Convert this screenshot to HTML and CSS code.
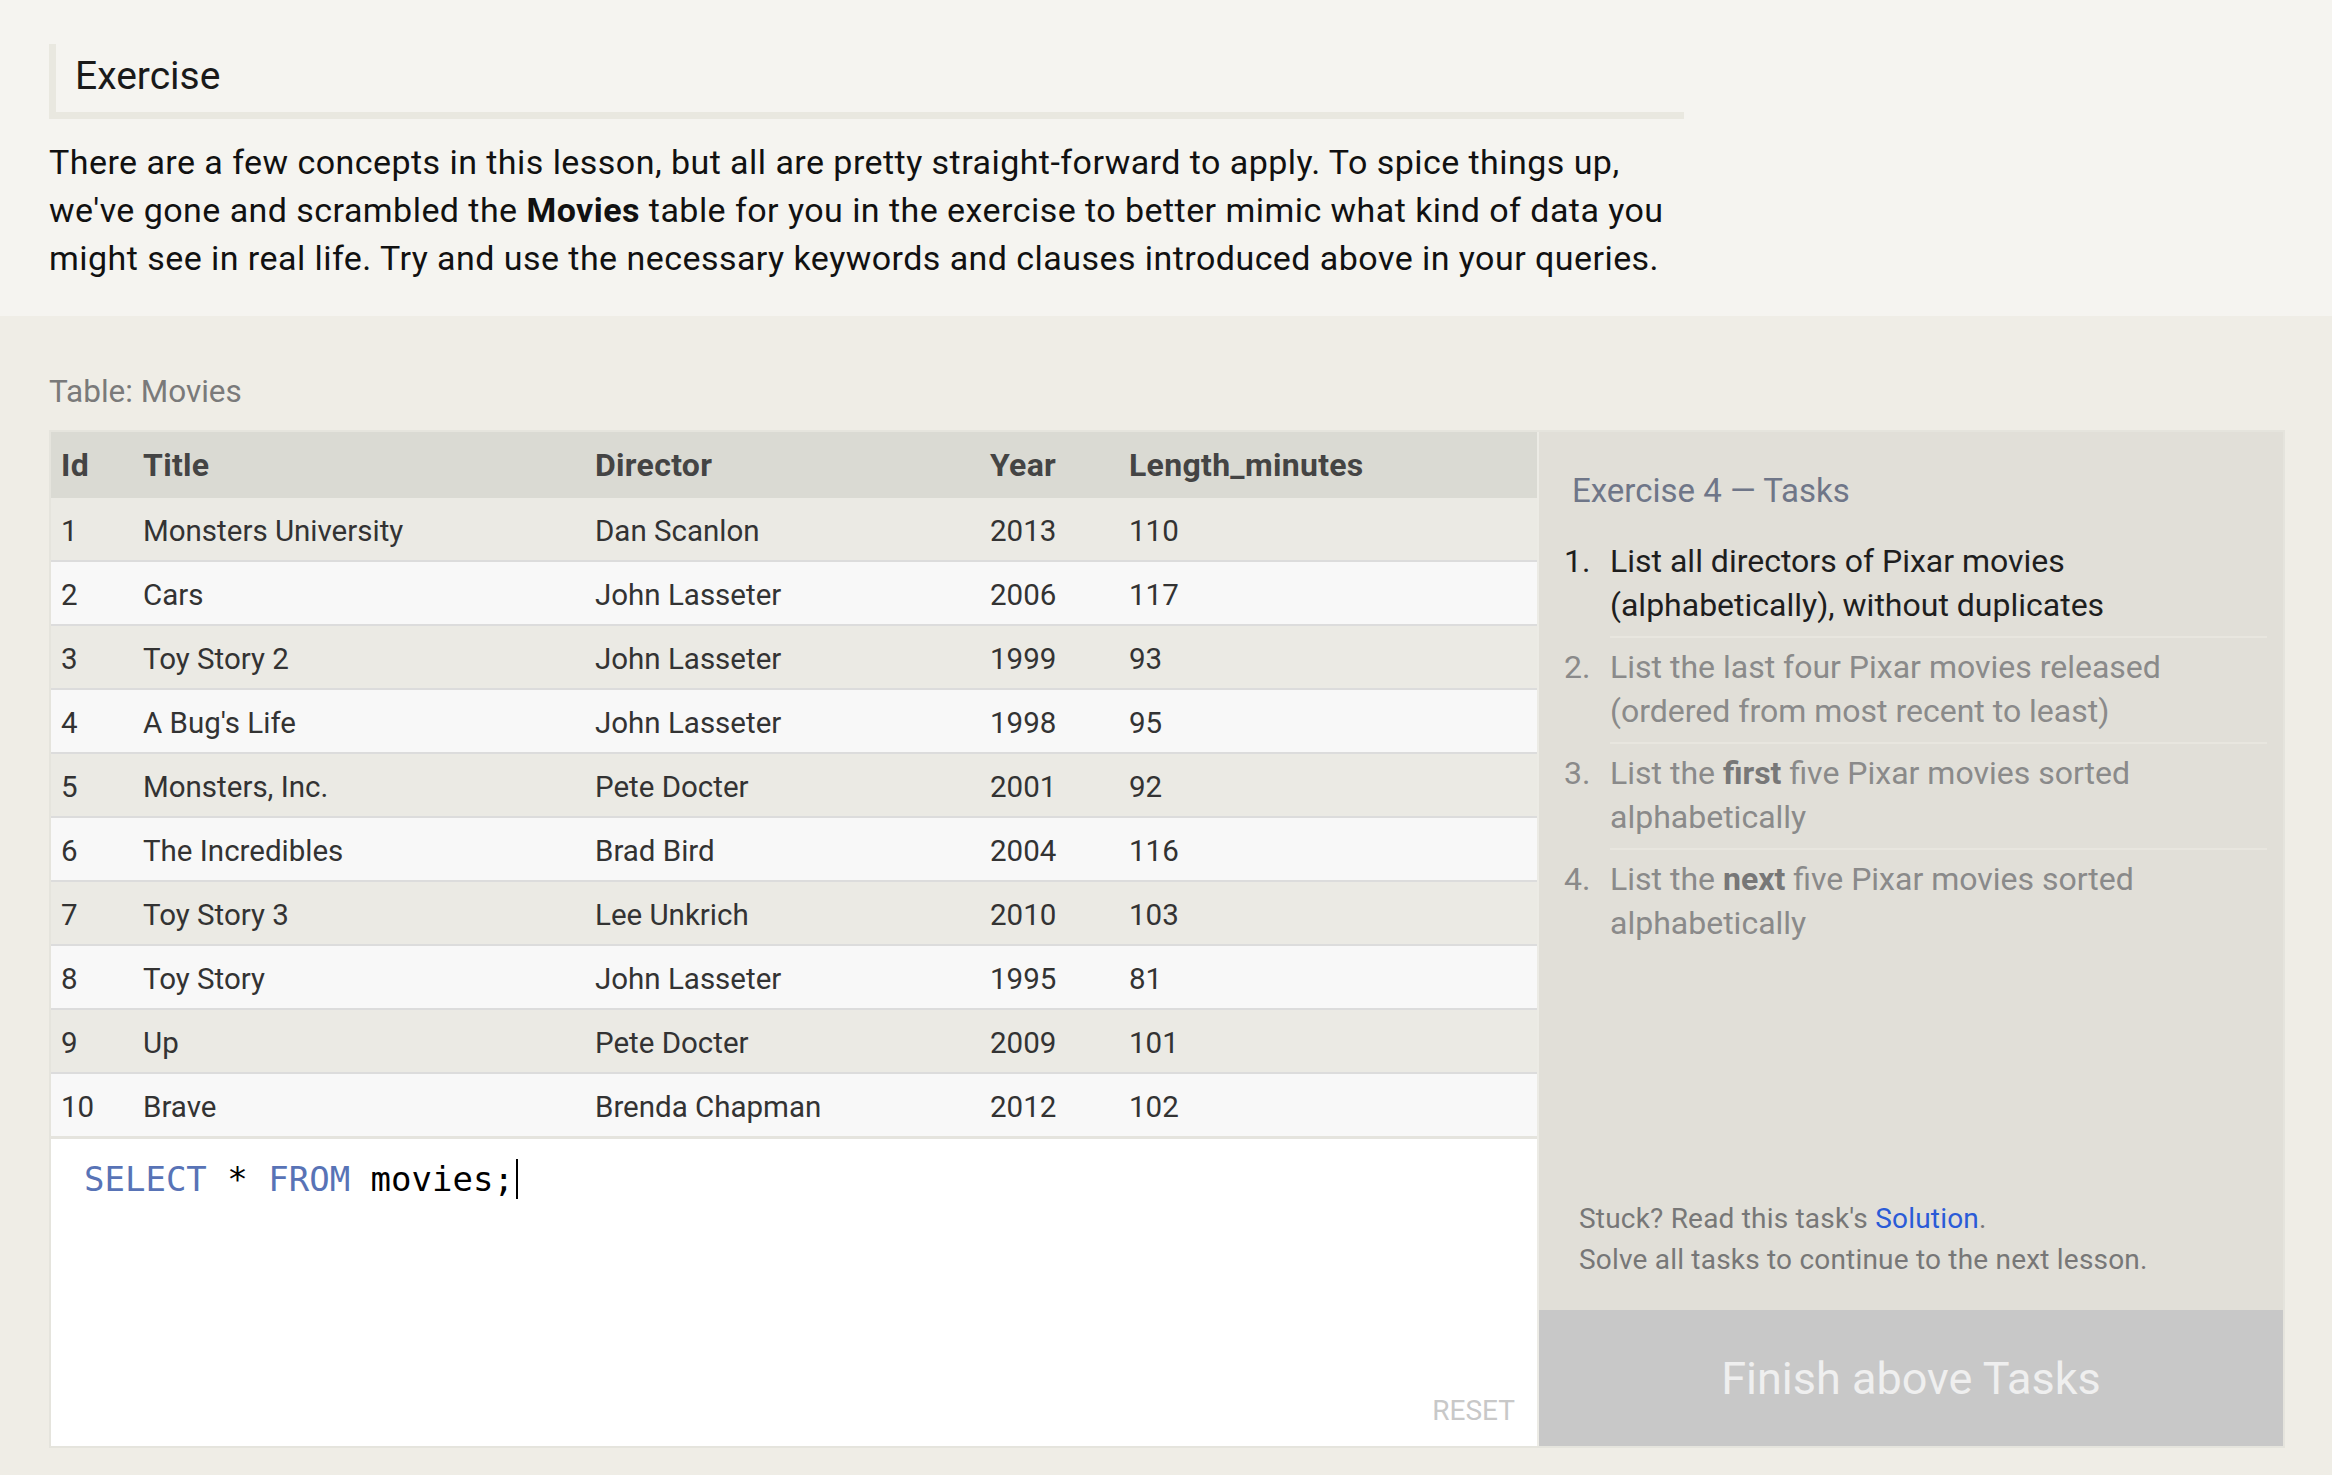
FILE: index.html
```html
<!DOCTYPE html>
<html lang="en">
<head>
<meta charset="utf-8">
<title>SQL Lesson – Exercise</title>
<link rel="stylesheet" href="styles.css">
</head>
<body>
<section class="intro">
  <h2 class="ex-heading">Exercise</h2>
  <p class="ex-text">There are a few concepts in this lesson, but all are pretty straight-forward to apply. To spice things up,<br>we've gone and scrambled the <strong>Movies</strong> table for you in the exercise to better mimic what kind of data you<br>might see in real life. Try and use the necessary keywords and clauses introduced above in your queries.</p>
</section>
<section class="workspace">
  <div class="table-label">Table: Movies</div>
  <div class="board">
    <div class="left">
      <table class="movies">
        <colgroup>
          <col class="c-id"><col class="c-title"><col class="c-dir"><col class="c-year"><col class="c-len">
        </colgroup>
        <thead>
          <tr><th>Id</th><th>Title</th><th>Director</th><th>Year</th><th>Length_minutes</th></tr>
        </thead>
        <tbody>
          <tr><td>1</td><td>Monsters University</td><td>Dan Scanlon</td><td>2013</td><td>110</td></tr>
          <tr><td>2</td><td>Cars</td><td>John Lasseter</td><td>2006</td><td>117</td></tr>
          <tr><td>3</td><td>Toy Story 2</td><td>John Lasseter</td><td>1999</td><td>93</td></tr>
          <tr><td>4</td><td>A Bug's Life</td><td>John Lasseter</td><td>1998</td><td>95</td></tr>
          <tr><td>5</td><td>Monsters, Inc.</td><td>Pete Docter</td><td>2001</td><td>92</td></tr>
          <tr><td>6</td><td>The Incredibles</td><td>Brad Bird</td><td>2004</td><td>116</td></tr>
          <tr><td>7</td><td>Toy Story 3</td><td>Lee Unkrich</td><td>2010</td><td>103</td></tr>
          <tr><td>8</td><td>Toy Story</td><td>John Lasseter</td><td>1995</td><td>81</td></tr>
          <tr><td>9</td><td>Up</td><td>Pete Docter</td><td>2009</td><td>101</td></tr>
          <tr><td>10</td><td>Brave</td><td>Brenda Chapman</td><td>2012</td><td>102</td></tr>
        </tbody>
      </table>
      <div class="editor">
        <div class="code"><span class="kw">SELECT</span> * <span class="kw">FROM</span> movies;<span class="cursor"></span></div>
        <div class="reset">RESET</div>
      </div>
    </div>
    <aside class="tasks">
      <h3 class="tasks-title">Exercise 4 — Tasks</h3>
      <ol class="task-list">
        <li class="task current"><span class="num">1.</span><span class="txt">List all directors of Pixar movies (alphabetically), without duplicates</span></li>
        <li class="task"><span class="num">2.</span><span class="txt">List the last four Pixar movies released (ordered from most recent to least)</span></li>
        <li class="task"><span class="num">3.</span><span class="txt">List the <b>first</b> five Pixar movies sorted alphabetically</span></li>
        <li class="task"><span class="num">4.</span><span class="txt">List the <b>next</b> five Pixar movies sorted alphabetically</span></li>
      </ol>
      <div class="stuck">
        <div>Stuck? Read this task's <a class="solution" href="#">Solution</a>.</div>
        <div>Solve all tasks to continue to the next lesson.</div>
      </div>
      <div class="finish">Finish above Tasks</div>
    </aside>
  </div>
</section>
</body>
</html>
```
FILE: styles.css
```css
html {
  background: #efede6;
}
body {
  margin: 0;
  font-family: Roboto, "Liberation Sans", sans-serif;
  color: #111;
}
.intro {
  background: #f5f4f0;
  padding: 44px 0 34px 49px;
}
.ex-heading {
  margin: 0;
  width: 1609px;
  height: 63px;
  box-sizing: content-box;
  display: flex;
  align-items: center;
  padding: 0 0 5px 19px;
  border-left: 7px solid #e9e8e0;
  border-bottom: 7px solid #e9e8e0;
  font-size: 39px;
  line-height: 40px;
  font-weight: 400;
  color: #1a1a1a;
}
.ex-text {
  margin: 19px 0 0;
  font-size: 34px;
  letter-spacing: 0.45px;
  line-height: 48px;
  color: #111;
  white-space: nowrap;
}
.ex-text strong {
  font-weight: 700;
}
.workspace {
  padding: 56px 0 26px 49px;
}
.table-label {
  font-size: 31.5px;
  line-height: 40px;
  color: #7a7a7a;
  margin-bottom: 18px;
}
.board {
  width: 2232px;
  height: 1014px;
  border: 2px solid #e5e4dd;
  display: grid;
  grid-template-columns: 1486px 746px;
}
.left {
  display: flex;
  flex-direction: column;
  min-height: 0;
}
.movies {
  width: 1486px;
  border-collapse: separate;
  border-spacing: 0;
  table-layout: fixed;
}
.c-id { width: 82px; }
.c-title { width: 452px; }
.c-dir { width: 395px; }
.c-year { width: 139px; }
.c-len { width: 418px; }
.movies th {
  height: 66px;
  box-sizing: border-box;
  padding: 0 0 0 10px;
  background: #dadad3;
  text-align: left;
  font-size: 32px;
  letter-spacing: 0.3px;
  font-weight: 700;
  color: #444;
}
.movies td {
  height: 64px;
  box-sizing: border-box;
  padding: 3px 0 0 10px;
  font-size: 29.5px;
  color: #333;
  white-space: nowrap;
  border-bottom: 2px solid #dcdcdc;
}
.movies tbody tr:nth-child(odd) {
  background: #ebeae4;
}
.movies tbody tr:nth-child(even) {
  background: #f8f8f8;
}
.movies tbody tr:last-child td {
  height: 65px;
  border-bottom: 3px solid #e5e4de;
}
.editor {
  flex: 1;
  background: #fff;
  display: flex;
  flex-direction: column;
  padding: 20px 22px 19px 33px;
}
.code {
  font-family: "DejaVu Sans Mono", "Liberation Mono", monospace;
  font-size: 34px;
  line-height: 40px;
  color: #000;
  white-space: pre;
}
.kw {
  color: #5873b6;
}
.cursor {
  display: inline-block;
  width: 2px;
  height: 40px;
  background: #000;
  vertical-align: top;
  margin-left: 2px;
}
.reset {
  margin-top: auto;
  align-self: flex-end;
  font-size: 28px;
  line-height: 32px;
  color: #c8c8c8;
}
.tasks {
  background: #e1dfd8;
  border-left: 2px solid #ecebe5;
  display: flex;
  flex-direction: column;
}
.tasks-title {
  margin: 40px 0 0 33px;
  font-size: 33px;
  line-height: 38px;
  font-weight: 400;
  color: #6f7688;
}
.task-list {
  list-style: none;
  margin: 22px 16px 0 25px;
  padding: 0;
}
.task {
  display: flex;
  padding-top: 7px;
  font-size: 32px;
  line-height: 44px;
  color: #8a8a8a;
}
.task.current {
  color: #1e1e1e;
}
.task .num {
  width: 46px;
  flex: none;
}
.task .txt {
  flex: 1;
  padding-bottom: 9px;
  border-bottom: 2px solid #e8e6df;
}
.task:last-child .txt {
  border-bottom: none;
}
.task b {
  color: #777;
  font-weight: 700;
}
.stuck {
  margin: auto 0 30px 40px;
  font-size: 28px;
  letter-spacing: 0.2px;
  line-height: 41px;
  color: #777;
}
.solution {
  color: #2a5bd7;
  text-decoration: none;
}
.finish {
  height: 136px;
  background: #c8c8c8;
  color: #efefef;
  font-size: 45px;
  display: flex;
  align-items: center;
  justify-content: center;
}
```
